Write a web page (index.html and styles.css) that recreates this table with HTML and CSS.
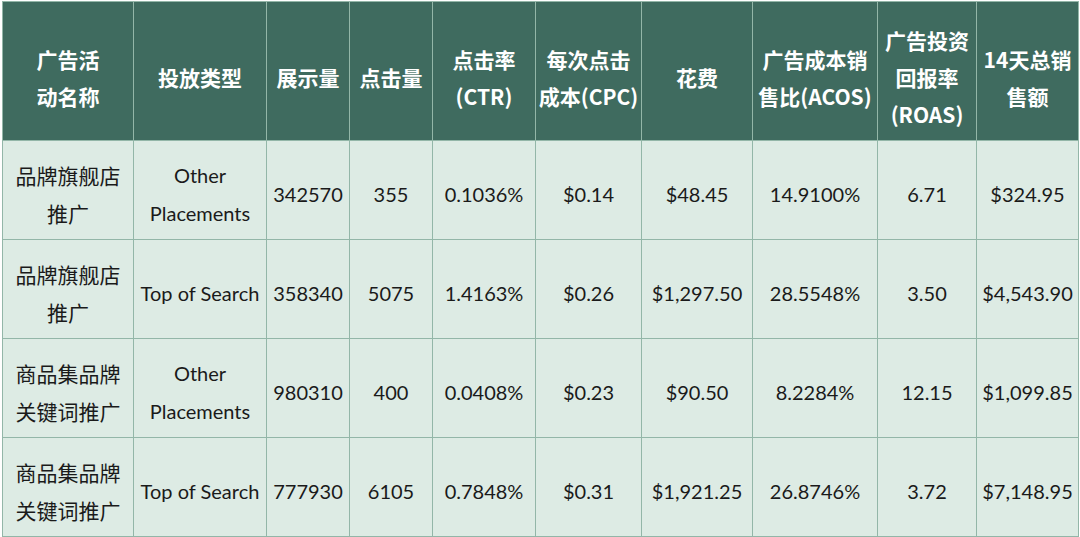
FILE: index.html
```html
<!DOCTYPE html>
<html lang="zh-CN">
<head>
<meta charset="utf-8">
<link rel="stylesheet" href="styles.css">
</head>
<body>
<table class="ads">
  <colgroup>
    <col class="c1"><col class="c2"><col class="c3"><col class="c4"><col class="c5">
    <col class="c6"><col class="c7"><col class="c8"><col class="c9"><col class="c10">
  </colgroup>
  <thead>
    <tr>
      <th>广告活<br>动名称</th>
      <th>投放类型</th>
      <th>展示量</th>
      <th>点击量</th>
      <th>点击率<br>(CTR)</th>
      <th>每次点击<br>成本(CPC)</th>
      <th>花费</th>
      <th>广告成本销<br>售比(ACOS)</th>
      <th>广告投资<br>回报率<br>(ROAS)</th>
      <th>14天总销<br>售额</th>
    </tr>
  </thead>
  <tbody>
    <tr>
      <td class="zh">品牌旗舰店<br>推广</td>
      <td>Other<br>Placements</td>
      <td>342570</td>
      <td>355</td>
      <td>0.1036%</td>
      <td>$0.14</td>
      <td>$48.45</td>
      <td>14.9100%</td>
      <td>6.71</td>
      <td>$324.95</td>
    </tr>
    <tr>
      <td class="zh">品牌旗舰店<br>推广</td>
      <td>Top of Search</td>
      <td>358340</td>
      <td>5075</td>
      <td>1.4163%</td>
      <td>$0.26</td>
      <td>$1,297.50</td>
      <td>28.5548%</td>
      <td>3.50</td>
      <td>$4,543.90</td>
    </tr>
    <tr>
      <td class="zh">商品集品牌<br>关键词推广</td>
      <td>Other<br>Placements</td>
      <td>980310</td>
      <td>400</td>
      <td>0.0408%</td>
      <td>$0.23</td>
      <td>$90.50</td>
      <td>8.2284%</td>
      <td>12.15</td>
      <td>$1,099.85</td>
    </tr>
    <tr>
      <td class="zh">商品集品牌<br>关键词推广</td>
      <td>Top of Search</td>
      <td>777930</td>
      <td>6105</td>
      <td>0.7848%</td>
      <td>$0.31</td>
      <td>$1,921.25</td>
      <td>26.8746%</td>
      <td>3.72</td>
      <td>$7,148.95</td>
    </tr>
  </tbody>
</table>
</body>
</html>
```
FILE: styles.css
```css
html, body {
  margin: 0;
  padding: 0;
  background: #ffffff;
}
body {
  padding: 1px 0 0 2px;
}
.ads {
  border-collapse: collapse;
  table-layout: fixed;
  width: 1076px;
}
.c1 { width: 131px; }
.c2 { width: 133px; }
.c3 { width: 83px; }
.c4 { width: 83px; }
.c5 { width: 103px; }
.c6 { width: 106px; }
.c7 { width: 111px; }
.c8 { width: 125px; }
.c9 { width: 99px; }
.c10 { width: 102px; }

.ads th, .ads td {
  border: 1px solid #93b6a8;
  text-align: center;
  vertical-align: middle;
  white-space: nowrap;
  overflow: hidden;
}
.ads th {
  height: 125px;
  padding: 13px 0 0 0;
  background: #3f6b5f;
  color: #ffffff;
  font-family: "Noto Sans CJK SC", sans-serif;
  font-weight: 700;
  font-size: 21px;
  line-height: 37px;
}
.ads td {
  height: 90px;
  padding: 8px 0 0 0;
  background: #ddebe4;
  color: #1a1a1a;
  font-family: Lato, "Noto Sans CJK SC", sans-serif;
  font-size: 20px;
  line-height: 38px;
}
.ads td.zh {
  font-family: "Noto Sans CJK SC", sans-serif;
  font-size: 21px;
}
```
